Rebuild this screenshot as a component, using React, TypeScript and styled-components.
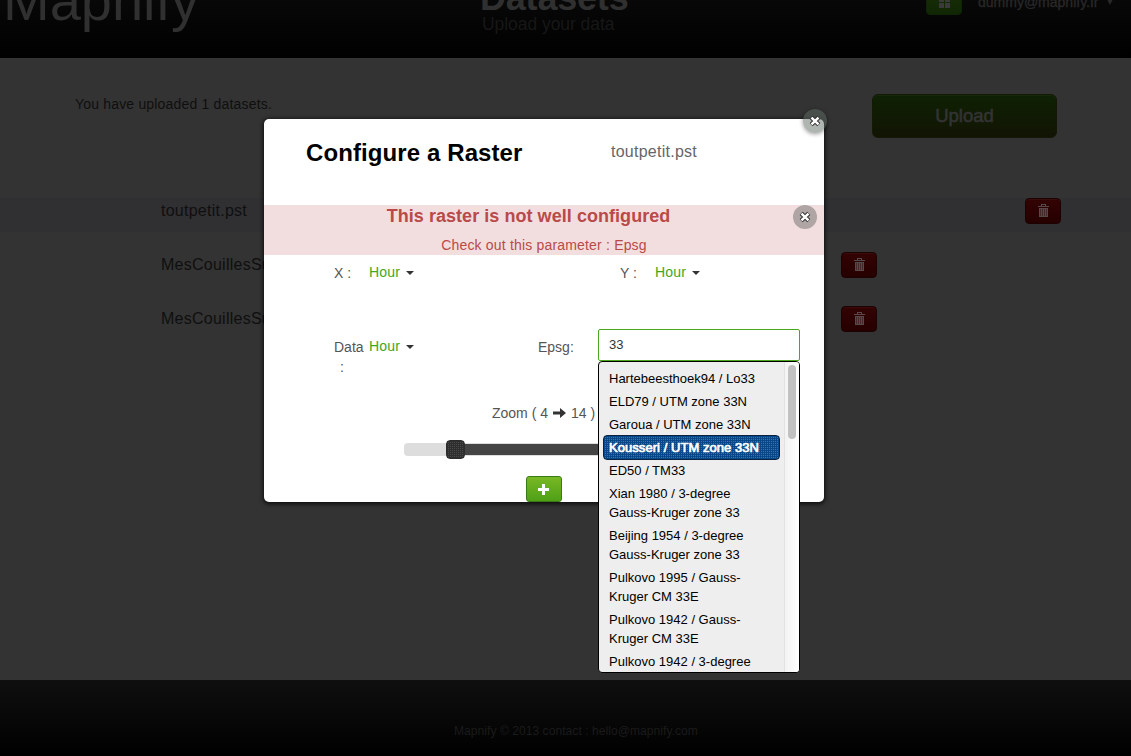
import React from 'react';
import styled, { createGlobalStyle } from 'styled-components';

const Global = createGlobalStyle`
  * { box-sizing: border-box; }
  body { margin: 0; background: #333; overflow: hidden; font: 14px/20px "Liberation Sans", Arial, sans-serif; color: #0f0f0f; }
  h1, h2, p, ul { margin: 0; padding: 0; }
`;

const Page = styled.div`
  position: relative;
  display: flex;
  flex-direction: column;
  width: 1131px;
  height: 756px;
  overflow: hidden;
  background: #333;
`;

const Header = styled.header`
  display: grid;
  grid-template-columns: 480px 446px 1fr;
  align-items: end;
  height: 90px;
  margin-top: -32px;
  flex: none;
  background: linear-gradient(#0c0c0c, #000);
`;

const Logo = styled.div`
  padding: 0 0 25px 3px;
  font-size: 56px;
  line-height: 64px;
  color: #303030;
`;

const Titles = styled.div`
  padding-bottom: 24px;
`;

const PageTitle = styled.h1`
  font-size: 36px;
  line-height: 40px;
  letter-spacing: -0.2px;
  color: #303030;
`;

const PageSubtitle = styled.p`
  padding-left: 2px;
  margin-top: -4px;
  font-size: 17.5px;
  line-height: 20px;
  letter-spacing: -0.05px;
  color: #171717;
`;

const Account = styled.div`
  display: flex;
  align-items: flex-end;
  height: 90px;
  padding-bottom: 43px;
  color: #292929;
`;

const HomeButton = styled.div`
  display: flex;
  justify-content: center;
  align-items: flex-end;
  width: 36px;
  height: 26px;
  padding-bottom: 6px;
  margin-right: 16px;
  border: 1px solid #0e2606;
  border-radius: 4px;
  background: linear-gradient(#182d07, #112704);
`;

const Email = styled.span`
  margin-bottom: 3px;
  -webkit-text-stroke: 0.3px #292929;
`;

const Triangle = styled.span`
  margin: 0 0 10px 7px;
  border: 4.5px solid transparent;
  border-top: 8px solid #292929;
  border-bottom: 0;
`;

const Main = styled.main`
  flex: 1;
  padding-top: 36px;
`;

const Intro = styled.div`
  display: flex;
  justify-content: space-between;
  height: 104px;
  padding: 0 74px 0 75px;
  letter-spacing: 0.18px;
`;

const UploadButton = styled.div`
  width: 185px;
  height: 44px;
  border: 1px solid #131905;
  border-radius: 6px;
  background: linear-gradient(#0e2103, #121404);
  box-shadow: inset 0 1px 0 #17290b;
  color: #333;
  font-size: 18.5px;
  line-height: 42px;
  letter-spacing: 0;
  text-align: center;
  -webkit-text-stroke: 0.6px #333;
`;

const FileRow = styled.div<{ $selected?: boolean; $end: number }>`
  display: flex;
  justify-content: space-between;
  height: 34px;
  margin-bottom: 20px;
  padding: 0 ${(p) => p.$end}px 0 161px;
  background: ${(p) => (p.$selected ? '#303033' : 'transparent')};
  font-size: 16px;
  line-height: 26px;
  letter-spacing: 0.25px;
`;

const DeleteButton = styled.div`
  display: flex;
  justify-content: center;
  padding-top: 5px;
  width: 36px;
  height: 26px;
  border: 1px solid #1c0202;
  border-radius: 4px;
  background: linear-gradient(#330303, #260000);
  box-shadow: inset 0 1px 0 #3a0b0b;
`;

const Footer = styled.footer`
  height: 76px;
  flex: none;
  padding: 41px 0 0 454px;
  background: linear-gradient(#0f0f0f, #000);
  color: #1b1b1b;
  font-size: 12px;
  letter-spacing: 0.07px;
`;

const Modal = styled.section`
  position: absolute;
  left: 264px;
  top: 119px;
  width: 560px;
  height: 383px;
  border-radius: 5px;
  background: #fff;
  box-shadow: 0 1px 4px 1px rgba(0, 0, 0, 0.75);
  color: #555;
`;

const ModalHeader = styled.div`
  display: grid;
  grid-template-columns: 305px 1fr;
  height: 86px;
  padding: 20px 0 0 42px;
`;

const ModalTitle = styled.h2`
  font-size: 24px;
  line-height: 28px;
  letter-spacing: 0.1px;
  color: #000;
`;

const FileName = styled.span`
  font-size: 16px;
  line-height: 26px;
  letter-spacing: 0.25px;
  color: #666;
`;

const Close = styled.div<{ $top: number; $right: number; $raised?: boolean }>`
  position: absolute;
  top: ${(p) => p.$top}px;
  right: ${(p) => p.$right}px;
  display: grid;
  place-items: center;
  width: 24px;
  height: 24px;
  border-radius: 50%;
  background: ${(p) => (p.$raised ? 'rgba(95, 107, 100, 0.5)' : '#aea5a4')};
  box-shadow: ${(p) => (p.$raised ? '0 1px 4px rgba(0, 0, 0, 0.4)' : 'none')};
`;

const Alert = styled.div`
  position: relative;
  height: 50px;
  background: #f2dede;
  color: #b94a48;
  text-align: center;
`;

const AlertTitle = styled.p`
  padding-right: 31px;
  font-size: 18px;
  font-weight: bold;
  line-height: 22px;
  letter-spacing: 0.05px;
`;

const AlertText = styled.p`
  margin-top: 8px;
  line-height: 20px;
  letter-spacing: 0.18px;
`;

const FieldRow = styled.div<{ $columns: string; $height: number }>`
  display: grid;
  grid-template-columns: ${(p) => p.$columns};
  height: ${(p) => p.$height}px;
  padding-left: 70px;
`;

const Label = styled.span`
  padding-top: 8px;
`;

const LabelEnd = styled.span`
  display: block;
  padding-left: 6px;
`;

const Hour = styled.span`
  display: flex;
  align-items: center;
  gap: 6px;
  height: 20px;
  margin-top: 7px;
  letter-spacing: 0.15px;
  color: #3ca81c;
`;

const Caret = styled.i`
  margin-top: 2px;
  border: 4px solid transparent;
  border-top-color: #333;
  border-bottom: 0;
`;

const Combo = styled.div`
  position: relative;
  width: 202px;
`;

const ComboInput = styled.div`
  height: 32px;
  padding-left: 10px;
  border: 1px solid #4aa81c;
  border-radius: 2px;
  color: #333;
  font-size: 13px;
  line-height: 30px;
`;

const Menu = styled.ul`
  position: absolute;
  z-index: 2;
  top: 32px;
  left: 0;
  display: flex;
  width: 202px;
  height: 312px;
  overflow: hidden;
  border: 1px solid #000;
  border-radius: 4px;
  background: #eee;
  color: #000;
  font-size: 13px;
  line-height: 19px;
  list-style: none;
`;

const Options = styled.div`
  flex: 1;
  padding: 5px 4px 0;
`;

const Option = styled.li<{ $active?: boolean }>`
  padding: ${(p) => (p.$active ? '2px 5px' : '2px 6px')};
  ${(p) =>
    p.$active &&
    `
    margin: -1px 0;
    border: 1px solid #0a2440;
    border-radius: 4px;
    background:
      linear-gradient(#08488a 50%, transparent 50%) 0 0 / 2px 2px,
      linear-gradient(90deg, #08488a 50%, #3a74ac 50%) 0 0 / 2px 2px;
    color: #fff;
    letter-spacing: 0.05px;
    -webkit-text-stroke: 0.7px #fff;
  `}
`;

const Scrollbar = styled.div`
  width: 15px;
  padding: 3px 0 0 3px;
  border-left: 1px solid #e2e2e2;
  background: linear-gradient(90deg, #f3f3f3, #fff);
`;

const Thumb = styled.div`
  width: 8px;
  height: 74px;
  border-radius: 4px;
  background: #c1c1c1;
`;

const ZoomLine = styled.div`
  display: flex;
  align-items: center;
  gap: 5px;
  height: 20px;
  padding-left: 228px;
`;

const Slider = styled.div`
  display: flex;
  align-items: center;
  width: 280px;
  height: 13px;
  margin: 20px 0 0 140px;
  padding-left: 42px;
  border-radius: 4px;
  background: #ddd;
`;

const Handle = styled.div`
  flex: none;
  width: 19px;
  height: 19px;
  border: 1px solid #2c2c2c;
  border-radius: 4px;
  background:
    linear-gradient(#2e2e2e 50%, transparent 50%) 0 0 / 2px 2px,
    linear-gradient(90deg, #2e2e2e 50%, #4a4a4a 50%) 0 0 / 2px 2px;
`;

const Range = styled.div`
  width: 190px;
  height: 11px;
  background: #444;
`;

const AddButton = styled.div`
  display: grid;
  place-items: center;
  width: 36px;
  height: 26px;
  margin: 20px 0 0 262px;
  border: 1px solid #3a7a14;
  border-radius: 3px;
  background: linear-gradient(#78b824, #4fa017);
`;

const CrossIcon = () => (
  <svg width="14" height="14" viewBox="0 0 14 14">
    <path d="M3.2 3.4 10.8 10.6M10.8 3.4 3.2 10.6" stroke="#333" strokeWidth="4.4" />
    <path d="M3.5 3.7 10.5 10.3M10.5 3.7 3.5 10.3" stroke="#fff" strokeWidth="2.5" />
  </svg>
);

const TrashIcon = () => (
  <svg width="11" height="14" viewBox="0 0 11 14" shapeRendering="crispEdges">
    <path d="M3 0h5v2h3v1H0V2h3zM4 1v1h3V1z" fill="#554949" fillRule="evenodd" />
    <path d="M1 4h9v9H1z" fill="#452a2a" />
    <path d="M1 4h9v9H1zM2 5v7h1V5zM4 5v7h1V5zM6 5v7h1V5zM8 5v7h1V5z" fill="#554949" fillRule="evenodd" />
  </svg>
);

const HomeIcon = () => (
  <svg width="11" height="11" viewBox="0 0 11 11" fill="#3a3a3a" shapeRendering="crispEdges">
    <path d="M0 0h5v5H0zM6 0h5v5H6zM0 6h5v5H0zM6 6h5v5H6z" />
  </svg>
);

const ArrowIcon = () => (
  <svg width="13" height="10" viewBox="0 0 13 10">
    <path d="M0 3.5h7V0L13 5l-6 5V6.5H0z" fill="#333" />
  </svg>
);

const PlusIcon = () => (
  <svg width="12" height="11" viewBox="0 0 12 11">
    <path d="M4 0h3v4h4v3H7v4H4V7H0V4h4z" fill="#fff" />
  </svg>
);

const HourSelect = () => (
  <Hour>
    Hour
    <Caret />
  </Hour>
);

const files = [
  { name: 'toutpetit.pst', end: 70, selected: true },
  { name: 'MesCouillesSu', end: 254 },
  { name: 'MesCouillesSu', end: 254 },
];

const projections = [
  'Hartebeesthoek94 / Lo33',
  'ELD79 / UTM zone 33N',
  'Garoua / UTM zone 33N',
  'Kousseri / UTM zone 33N',
  'ED50 / TM33',
  'Xian 1980 / 3-degree Gauss-Kruger zone 33',
  'Beijing 1954 / 3-degree Gauss-Kruger zone 33',
  'Pulkovo 1995 / Gauss-Kruger CM 33E',
  'Pulkovo 1942 / Gauss-Kruger CM 33E',
  'Pulkovo 1942 / 3-degree',
];

export default function App() {
  return (
    <Page>
      <Global />
      <Header>
        <Logo>Mapnify</Logo>
        <Titles>
          <PageTitle>Datasets</PageTitle>
          <PageSubtitle>Upload your data</PageSubtitle>
        </Titles>
        <Account>
          <HomeButton>
            <HomeIcon />
          </HomeButton>
          <Email>dummy@mapnify.fr</Email>
          <Triangle />
        </Account>
      </Header>
      <Main>
        <Intro>
          <p>You have uploaded 1 datasets.</p>
          <UploadButton>Upload</UploadButton>
        </Intro>
        {files.map((file, i) => (
          <FileRow key={i} $selected={file.selected} $end={file.end}>
            {file.name}
            <DeleteButton>
              <TrashIcon />
            </DeleteButton>
          </FileRow>
        ))}
      </Main>
      <Footer>Mapnify © 2013 contact : hello@mapnify.com</Footer>

      <Modal>
        <Close $top={-10} $right={-3} $raised>
          <CrossIcon />
        </Close>
        <ModalHeader>
          <ModalTitle>Configure a Raster</ModalTitle>
          <FileName>toutpetit.pst</FileName>
        </ModalHeader>
        <Alert>
          <AlertTitle>This raster is not well configured</AlertTitle>
          <AlertText>Check out this parameter : Epsg</AlertText>
          <Close $top={0} $right={7}>
            <CrossIcon />
          </Close>
        </Alert>
        <FieldRow $columns="35px 251px 35px 1fr" $height={74}>
          <Label>X :</Label>
          <HourSelect />
          <Label>Y :</Label>
          <HourSelect />
        </FieldRow>
        <FieldRow $columns="35px 169px 60px 1fr" $height={74}>
          <Label>
            Data
            <LabelEnd>:</LabelEnd>
          </Label>
          <HourSelect />
          <Label>Epsg:</Label>
          <Combo>
            <ComboInput>33</ComboInput>
            <Menu>
              <Options>
                {projections.map((name) => (
                  <Option key={name} $active={name.startsWith('Kousseri')}>
                    {name}
                  </Option>
                ))}
              </Options>
              <Scrollbar>
                <Thumb />
              </Scrollbar>
            </Menu>
          </Combo>
        </FieldRow>
        <ZoomLine>
          <span>Zoom ( 4</span>
          <ArrowIcon />
          <span>14 )</span>
        </ZoomLine>
        <Slider>
          <Handle />
          <Range />
        </Slider>
        <AddButton>
          <PlusIcon />
        </AddButton>
      </Modal>
    </Page>
  );
}
